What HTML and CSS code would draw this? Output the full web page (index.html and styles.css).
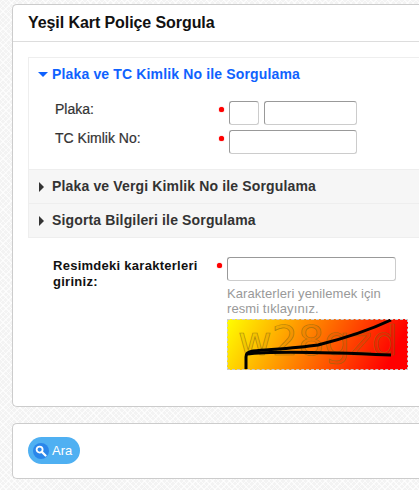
FILE: index.html
```html
<!DOCTYPE html>
<html lang="en">
<head>
    <meta charset="UTF-8">
    <meta name="viewport" content="width=device-width, initial-scale=1.0">
    <title>Yeşil Kart Poliçe Sorgula</title>
    <link rel="stylesheet" href="styles.css">
</head>
<body>
    <div class="card">
        <h1 class="card-title">Yeşil Kart Poliçe Sorgula</h1>
        <div class="card-body">
            <div class="accordion">
                <div class="section active">
                    <h2 class="section-title"><span class="arrow-down"></span>Plaka ve TC Kimlik No ile Sorgulama</h2>
                    <div class="section-content">
                        <div class="row">
                            <label class="field-label">Plaka:</label>
                            <span class="req"></span>
                            <input type="text" class="input input-xs">
                            <input type="text" class="input input-sm">
                        </div>
                        <div class="row">
                            <label class="field-label">TC Kimlik No:</label>
                            <span class="req"></span>
                            <input type="text" class="input input-md">
                        </div>
                    </div>
                </div>
                <div class="section">
                    <h2 class="section-title"><span class="arrow-right"></span>Plaka ve Vergi Kimlik No ile Sorgulama</h2>
                </div>
                <div class="section">
                    <h2 class="section-title"><span class="arrow-right"></span>Sigorta Bilgileri ile Sorgulama</h2>
                </div>
            </div>

            <div class="captcha">
                <label class="captcha-label">Resimdeki karakterleri giriniz:</label>
                <span class="req"></span>
                <div class="captcha-field">
                    <input type="text" class="input input-lg">
                    <p class="hint">Karakterleri yenilemek için resmi tıklayınız.</p>
                    <svg class="captcha-img" width="181" height="51" viewBox="0 0 181 51">
                        <defs>
                            <linearGradient id="captchaBg" x1="0" y1="0" x2="1" y2="0.15">
                                <stop offset="0" stop-color="#ffff00"/>
                                <stop offset="1" stop-color="#ff0000"/>
                            </linearGradient>
                        </defs>
                        <rect width="181" height="51" fill="url(#captchaBg)"/>
                        <text x="11" y="36" class="captcha-text" textLength="160" lengthAdjust="spacingAndGlyphs">w28gzd</text>
                        <path d="M19 50 L19 38 C19 34 21 33 26 32 C50 30 70 29 91 26 C115 20 145 10 164 1" class="captcha-line"/>
                        <path d="M19 35 C50 31 120 34 164 36" class="captcha-line"/>
                    </svg>
                </div>
            </div>
        </div>
    </div>

    <div class="card card-actions">
        <button class="btn-search">
            <span class="btn-icon">
                <svg width="12" height="12" viewBox="0 0 12 12">
                    <circle cx="4.6" cy="4.6" r="3" fill="none" stroke="#fff" stroke-width="1.8"/>
                    <path d="M7 7 L10.5 10.5" stroke="#fff" stroke-width="2.2" stroke-linecap="round"/>
                </svg>
            </span>
            Ara
        </button>
    </div>
</body>
</html>
```

FILE: styles.css
```css
* {
    margin: 0;
    padding: 0;
    box-sizing: border-box;
}

body {
    width: 419px;
    height: 490px;
    overflow: hidden;
    padding: 4px 0 0 12px;
    font-family: "Liberation Sans", Arial, sans-serif;
    background-color: #f3f3f3;
    background-image:
        repeating-linear-gradient(45deg, rgba(255, 255, 255, 0.7) 0 1px, transparent 1px 4px),
        repeating-linear-gradient(-45deg, rgba(255, 255, 255, 0.7) 0 1px, transparent 1px 4px);
}

/* cards run off the right side of the window, so no right border */
.card {
    background: #fff;
    border: 1px solid #ccc;
    border-right: 0;
    border-radius: 5px 0 0 5px;
    height: 403px;
}

.card-title {
    height: 37px;
    padding: 9px 15px 0;
    font-size: 16px;
    line-height: 18px;
    letter-spacing: -0.08px;
    font-weight: bold;
    color: #111;
    border-bottom: 1px solid #ddd;
}

.card-body {
    padding: 15px 0 0 15px;
}

.accordion {
    border: 1px solid #eee;
    border-right: 0;
}

.section-title {
    height: 34px;
    padding-left: 9px;
    font-size: 14px;
    line-height: 33px;
    letter-spacing: 0.15px;
    font-weight: bold;
    color: #333;
    background: #f6f6f6;
    border-top: 1px solid #eee;
    display: flex;
    align-items: center;
}

.section.active .section-title {
    height: 33px;
    color: #0f62fe;
    background: #fff;
    border-top: 0;
}

.arrow-down {
    width: 0;
    height: 0;
    margin-right: 4px;
    border-left: 5px solid transparent;
    border-right: 5px solid transparent;
    border-top: 5px solid #0f62fe;
}

.arrow-right {
    width: 0;
    height: 0;
    margin: 0 8px 0 1px;
    border-top: 5px solid transparent;
    border-bottom: 5px solid transparent;
    border-left: 5px solid #333;
}

.section-content {
    padding: 10px 0 15px 26px;
}

.row {
    display: flex;
    align-items: flex-start;
    height: 24px;
    margin-bottom: 5px;
}

.row:last-child {
    margin-bottom: 0;
}

.field-label {
    width: 164px;
    font-size: 14px;
    line-height: 16px;
    color: #333;
    -webkit-text-stroke: 0.2px #333;
}

.req {
    width: 5px;
    height: 5px;
    margin: 6px 5px 0 0;
    background: #f00;
    border-radius: 50%;
    box-shadow: 0 0 1px #f00;
    flex-shrink: 0;
}

.input {
    height: 24px;
    background: #fff;
    border: 1px solid #ccc;
    border-top-color: #999;
    border-left-color: #999;
    border-radius: 3px;
}

.input-xs {
    width: 30px;
    margin-right: 5px;
}

.input-sm {
    width: 93px;
}

.input-md {
    width: 128px;
}

.input-lg {
    display: block;
    width: 169px;
}

.captcha {
    display: flex;
    align-items: flex-start;
    padding: 19px 0 0 25px;
}

.captcha-label {
    width: 164px;
    padding-top: 1px;
    font-size: 13px;
    line-height: 16px;
    letter-spacing: 0.27px;
    font-weight: bold;
    color: #111;
}

.hint {
    width: 175px;
    margin-top: 5px;
    font-size: 13px;
    line-height: 15px;
    letter-spacing: 0.08px;
    color: #999;
}

.captcha-img {
    display: block;
    margin-top: 3px;
    outline: 1px dashed #ccc;
    outline-offset: -1px;
}

.captcha-text {
    font-family: "DejaVu Sans", sans-serif;
    font-size: 40px;
    fill: rgba(120, 90, 0, 0.1);
    stroke: #8a6a10;
    stroke-width: 0.7;
    stroke-opacity: 0.7;
}

.captcha-line {
    fill: none;
    stroke: #000;
    stroke-width: 3;
}

.card-actions {
    height: 56px;
    margin-top: 16px;
    padding: 13px 15px;
}

.btn-search {
    display: flex;
    align-items: center;
    width: 52px;
    height: 27px;
    padding-left: 5px;
    font-family: inherit;
    font-size: 13px;
    color: #fff;
    background: #4fb0f2;
    border: 0;
    border-radius: 14px;
}

.btn-icon {
    display: flex;
    align-items: center;
    justify-content: center;
    width: 16px;
    height: 16px;
    margin-right: 3px;
    background: #2a86ea;
    border-radius: 50%;
}
```
